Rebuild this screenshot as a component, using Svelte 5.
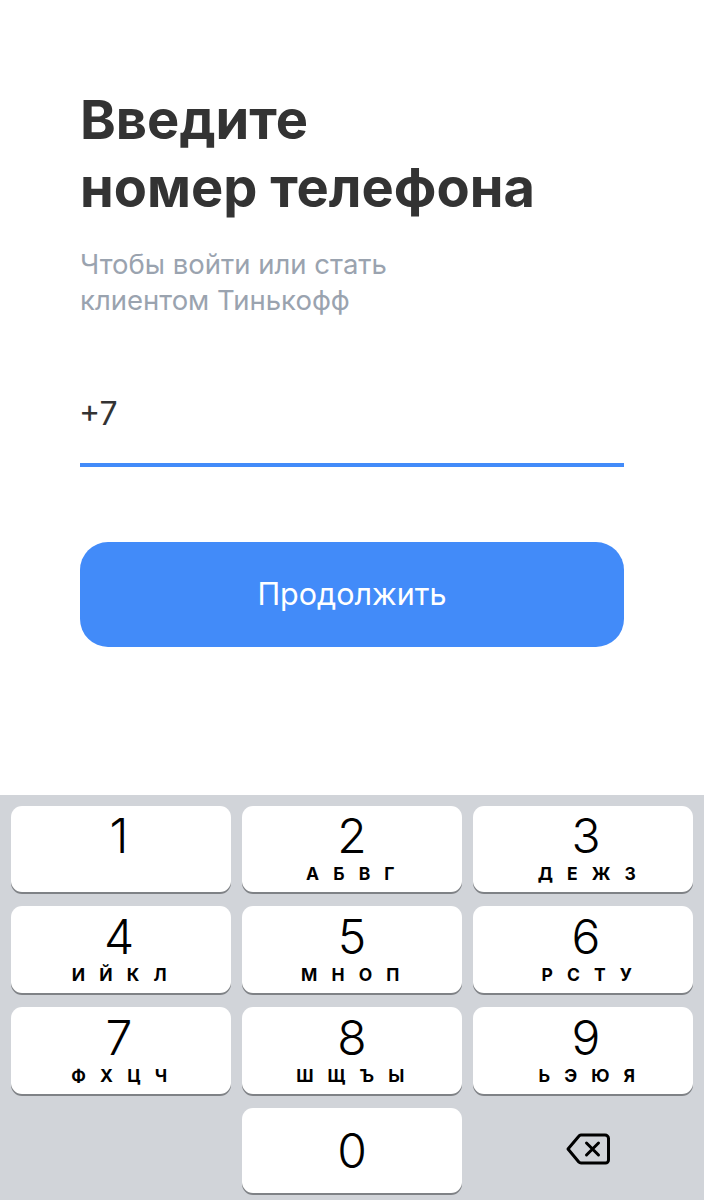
<script lang="ts">
  const keys = [
    { digit: "1", letters: "" },
    { digit: "2", letters: "А Б В Г" },
    { digit: "3", letters: "Д Е Ж З" },
    { digit: "4", letters: "И Й К Л" },
    { digit: "5", letters: "М Н О П" },
    { digit: "6", letters: "Р С Т У" },
    { digit: "7", letters: "Ф Х Ц Ч" },
    { digit: "8", letters: "Ш Щ Ъ Ы" },
    { digit: "9", letters: "Ь Э Ю Я" },
  ];
</script>

<div class="screen">
  <main class="form">
    <h1 class="title">Введите<br />номер телефона</h1>
    <p class="hint">Чтобы войти или стать<br />клиентом Тинькофф</p>
    <div class="phone"><span class="code">+7</span></div>
    <button class="submit">Продолжить</button>
  </main>

  <div class="keyboard">
    {#each keys as key}
      <button class="key">
        <span class="digit">{key.digit}</span>
        <span class="letters">{key.letters}</span>
      </button>
    {/each}
    <div class="blank"></div>
    <button class="key zero">
      <span class="digit">0</span>
    </button>
    <div class="backspace">
      <svg width="44" height="32" viewBox="0 0 44 32" fill="none" stroke="#000" stroke-width="3" stroke-linecap="round" stroke-linejoin="round">
        <path d="M15 2H39a3.500 3.500 0 0 1 3.500 3.500V27a3 3 0 0 1-3 3H15a3 3 0 0 1-2.200-1L2 16 12.800 3.200A3 3 0 0 1 15 2Z" />
        <path d="M20.500 10 32.500 22M32.500 10 20.500 22" />
      </svg>
    </div>
  </div>
</div>

<style>
  :global(body) {
    margin: 0;
    background: #fff;
  }

  .screen {
    width: 704px;
    height: 1200px;
    display: flex;
    flex-direction: column;
    overflow: hidden;
    font-family: Inter, "Noto Sans", sans-serif;
  }

  .form {
    flex: 1;
    padding: 85px 80px 0;
    display: flex;
    flex-direction: column;
  }

  .title {
    margin: 0;
    font-size: 54.200px;
    line-height: 68px;
    font-weight: 700;
    color: #333;
  }

  .hint {
    margin: 25px 0 0;
    font-size: 27.500px;
    line-height: 36px;
    color: #9aa3af;
  }

  .phone {
    margin-top: 65px;
    height: 80px;
    border-bottom: 4px solid #428bf9;
    font-size: 32px;
    line-height: 62px;
    color: #333;
  }

  .code {
    margin-left: -1px;
  }

  .submit {
    margin-top: 75px;
    height: 105px;
    border: none;
    border-radius: 28px;
    background: #428bf9;
    color: #fff;
    font-family: inherit;
    font-size: 30.500px;
    padding: 0 0 2px;
  }

  .keyboard {
    height: 405px;
    box-sizing: border-box;
    background: #d1d4d9;
    padding: 11px 11px 0;
    display: grid;
    grid-template-columns: repeat(3, 220px);
    grid-template-rows: 86px 87px 87px 85px;
    column-gap: 11px;
    row-gap: 14px;
  }

  .key {
    border: none;
    padding: 0;
    background: #fff;
    border-radius: 11px;
    box-shadow: 0 2px 0.500px #7f8286;
    color: #000;
    font-family: inherit;
    display: flex;
    flex-direction: column;
    align-items: center;
  }

  .key:nth-child(n + 4) {
    padding-top: 1px;
  }

  .digit {
    margin-top: 5px;
    font-size: 48px;
    line-height: 50px;
    font-weight: 300;
  }

  .letters {
    margin-top: 3px;
    font-size: 17.500px;
    line-height: 20px;
    font-weight: 700;
    letter-spacing: 3.500px;
    word-spacing: 3px;
  }

  /* цифры на клавиатуре не совсем по центру клавиш */
  .key:nth-child(3n + 1) .digit {
    margin-right: 4px;
  }

  .key:nth-child(3n) .digit {
    margin-left: 6px;
  }

  .key:nth-child(3n) .letters {
    margin-left: 11px;
  }

  .zero {
    justify-content: center;
  }

  .zero .digit {
    margin-top: 0;
    margin-right: 0;
    margin-left: 0;
  }

  .backspace {
    display: flex;
    align-items: center;
    justify-content: center;
    padding: 0 0 3px 9px;
  }
</style>
